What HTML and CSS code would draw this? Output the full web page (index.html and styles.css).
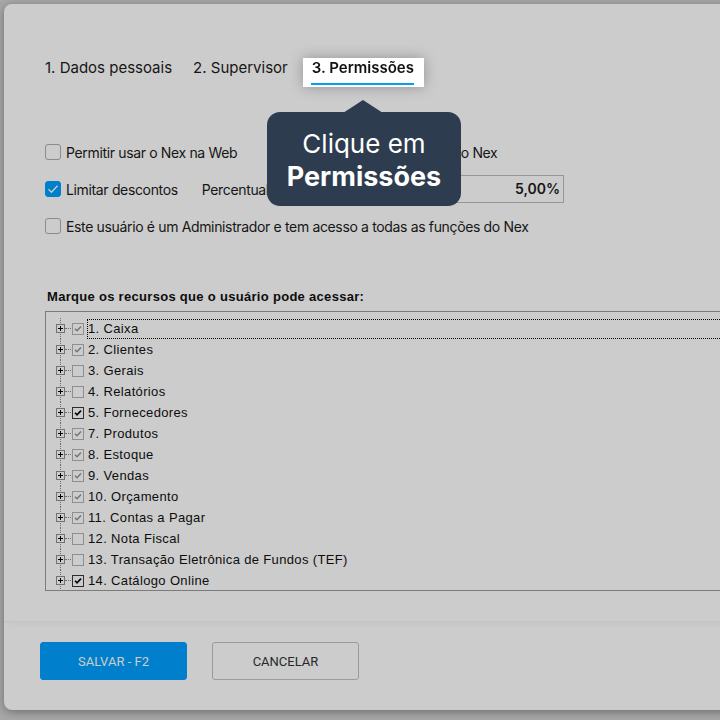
FILE: index.html
```html
<!DOCTYPE html>
<html lang="pt-BR">
<head>
  <meta charset="UTF-8" />
  <title>Usuário - Permissões</title>
  <link rel="stylesheet" href="styles.css">
</head>
<body>
  <div class="backdrop">
    <div class="dialog">
      <div class="dialog-main">
        <nav class="tabs">
          <div class="tab"><span>1. Dados pessoais</span></div>
          <div class="tab"><span>2. Supervisor</span></div>
          <div class="tab active"><span>3. Permissões</span></div>
        </nav>

        <div class="options">
          <div class="row">
            <label class="check web"><i class="box"></i>Permitir usar o Nex na Web</label>
            <label class="check"><i class="box"></i>Permitir acesso ao app do Nex</label>
          </div>
          <div class="row discount">
            <label class="check"><i class="box on"></i>Limitar descontos</label>
            <span class="percent-label">Percentual máximo de desconto</span>
            <div class="input">5,00%</div>
          </div>
          <div class="row">
            <label class="check"><i class="box"></i>Este usuário é um Administrador e tem acesso a todas as funções do Nex</label>
          </div>
        </div>

        <h3 class="tree-title">Marque os recursos que o usuário pode acessar:</h3>
        <div class="tree">
          <div class="node"><span class="exp"></span><span class="dots"></span><span class="cb grey"></span><span class="text focus">1. Caixa</span></div>
          <div class="node"><span class="exp"></span><span class="dots"></span><span class="cb grey"></span><span class="text">2. Clientes</span></div>
          <div class="node"><span class="exp"></span><span class="dots"></span><span class="cb"></span><span class="text">3. Gerais</span></div>
          <div class="node"><span class="exp"></span><span class="dots"></span><span class="cb"></span><span class="text">4. Relatórios</span></div>
          <div class="node"><span class="exp"></span><span class="dots"></span><span class="cb black"></span><span class="text">5. Fornecedores</span></div>
          <div class="node"><span class="exp"></span><span class="dots"></span><span class="cb grey"></span><span class="text">7. Produtos</span></div>
          <div class="node"><span class="exp"></span><span class="dots"></span><span class="cb grey"></span><span class="text">8. Estoque</span></div>
          <div class="node"><span class="exp"></span><span class="dots"></span><span class="cb grey"></span><span class="text">9. Vendas</span></div>
          <div class="node"><span class="exp"></span><span class="dots"></span><span class="cb grey"></span><span class="text">10. Orçamento</span></div>
          <div class="node"><span class="exp"></span><span class="dots"></span><span class="cb grey"></span><span class="text">11. Contas a Pagar</span></div>
          <div class="node"><span class="exp"></span><span class="dots"></span><span class="cb"></span><span class="text">12. Nota Fiscal</span></div>
          <div class="node"><span class="exp"></span><span class="dots"></span><span class="cb"></span><span class="text">13. Transação Eletrônica de Fundos (TEF)</span></div>
          <div class="node"><span class="exp"></span><span class="dots"></span><span class="cb black"></span><span class="text">14. Catálogo Online</span></div>
        </div>
      </div>

      <footer class="dialog-footer">
        <button class="btn primary">Salvar - F2</button>
        <button class="btn">Cancelar</button>
      </footer>
    </div>
  </div>

  <!-- tour: dim everything except the highlighted tab -->
  <div class="overlay"></div>
  <div class="tour-tip">Clique em<br><strong>Permissões</strong></div>
</body>
</html>
```

FILE: styles.css
```css
:root {
  --primary: #00a0ff;
  --text: #1c1c1c;
  --tip: #2d3c4e;
}
html, body {
  margin: 0; padding: 0;
  width: 720px; height: 720px;
  overflow: hidden;
  background: #d2d2d2;
  font-family: Inter, "Noto Sans", sans-serif;
  color: var(--text);
}
.backdrop {
  padding: 4px 0 0 4px;
}

/* Dialog */
.dialog {
  width: 790px;
  height: 706px;
  background: #fff;
  border-radius: 8px;
  box-shadow: 0 2px 10px rgba(0,0,0,0.35);
  display: flex;
  flex-direction: column;
}
.dialog-main {
  flex: 1;
  padding: 54px 0 0 41px;
  box-shadow: 0 6px 8px -6px rgba(0,0,0,0.08);
  border-radius: 8px 8px 0 0;
}
.dialog-footer {
  height: 89px;
  box-sizing: border-box;
  padding: 20px 0 0 36px;
  display: flex;
  align-items: flex-start;
  gap: 25px;
  border-top: 1px solid #f4f4f4;
}

/* Tabs */
.tabs {
  display: flex;
  margin-left: -9px;
  gap: 2px;
}
.tab {
  padding: 0 10px 2px 8px;
  font-size: 15px;
}
.tab span {
  display: block;
  line-height: 20px;
  padding-bottom: 5px;
  border-bottom: 2px solid transparent;
  padding-left: 1px;
}
.tab.active {
  position: relative;
  z-index: 11;
  margin-left: 3px;
  background: #fff;
  font-weight: 600;
  color: #111;
  box-shadow: 0 0 14px rgba(0,0,0,0.28);
}
.tab.active span { border-bottom-color: #0a9bf2; }

/* Checkbox options */
.options {
  margin-top: 51px;
  display: flex;
  flex-direction: column;
  gap: 9px;
}
.row {
  height: 28px;
  display: flex;
  align-items: center;
  font-size: 14px;
  letter-spacing: -0.35px;
}
.check {
  display: flex;
  align-items: center;
  gap: 5px;
}
.check.web { width: 239px; }
.box {
  width: 16px; height: 16px;
  box-sizing: border-box;
  border: 1.5px solid #aeaeae;
  border-radius: 3px;
  background: #fff;
}
.box.on {
  border-color: var(--primary);
  background: var(--primary) url("data:image/svg+xml,%3Csvg xmlns='http://www.w3.org/2000/svg' viewBox='0 0 16 16'%3E%3Cpath d='M3.5 8.2l3 3 6-6.4' fill='none' stroke='%23fff' stroke-width='1.3'/%3E%3C/svg%3E") center / 16px no-repeat;
}
.discount { width: 519px; }
.percent-label { margin-left: 24px; }
.input {
  margin-left: auto;
  width: 108px;
  height: 28px;
  box-sizing: border-box;
  border: 1px solid #bcbcbc;
  text-align: right;
  padding: 0 3px;
  line-height: 26px;
  font-weight: 600;
  letter-spacing: 0;
}

/* Tree */
.tree-title {
  margin: 49px 0 6px 2px;
  font: bold 13px/16px "Liberation Sans", Arial, sans-serif;
  letter-spacing: 0.3px;
  color: #111;
}
.tree {
  height: 280px;
  box-sizing: border-box;
  border: 1px solid #9a9a9a;
  border-right: 0;
  padding-top: 6px;
  overflow: hidden;
  font: 13px "Liberation Sans", Arial, sans-serif;
  letter-spacing: 0.35px;
}
.node {
  height: 21px;
  display: flex;
  align-items: center;
  padding-left: 10px;
  background: repeating-linear-gradient(to bottom, #8a8a8a 0 1px, transparent 1px 2px) 14px 0 / 1px 100% no-repeat;
}
.exp {
  width: 9px; height: 9px;
  box-sizing: border-box;
  border: 1px solid #8f8f8f;
  background: #fff url("data:image/svg+xml,%3Csvg xmlns='http://www.w3.org/2000/svg' viewBox='0 0 7 7'%3E%3Cpath d='M1 3.5h5M3.5 1v5' stroke='%23000' stroke-width='1'/%3E%3C/svg%3E") center / 7px no-repeat;
}
.dots {
  width: 6px;
  margin: 0 1px 0 0;
  border-top: 1px dotted #8a8a8a;
}
.cb {
  width: 12px; height: 12px;
  box-sizing: border-box;
  border: 1px solid #b3b3b3;
  background: #fff;
}
.cb.grey {
  background: #fff url("data:image/svg+xml,%3Csvg xmlns='http://www.w3.org/2000/svg' viewBox='0 0 10 10'%3E%3Cpath d='M2 4.8l2 2 4-4.2' fill='none' stroke='%23909090' stroke-width='1.4'/%3E%3C/svg%3E") center / 10px no-repeat;
}
.cb.black {
  border-color: #3a3a3a;
  background: #fff url("data:image/svg+xml,%3Csvg xmlns='http://www.w3.org/2000/svg' viewBox='0 0 10 10'%3E%3Cpath d='M2 4.8l2 2 4-4.2' fill='none' stroke='%23000' stroke-width='1.6'/%3E%3C/svg%3E") center / 10px no-repeat;
}
.text {
  margin-left: 3px;
  padding: 1px 1px;
  line-height: 18px;
  color: #111;
}
.text.focus {
  flex: 1;
  outline: 1px dotted #000;
  outline-offset: -1px;
}

/* Footer buttons */
.btn {
  width: 147px;
  height: 38px;
  border-radius: 3px;
  border: 1px solid #c2c2c2;
  background: #fff;
  font: 13px Roboto, sans-serif;
  text-transform: uppercase;
  color: #333;
}
.btn.primary {
  background: var(--primary);
  border-color: var(--primary);
  color: #fff;
}

/* Tour overlay + tooltip */
.overlay {
  position: fixed;
  inset: 0;
  background: rgba(0,0,0,0.2);
  z-index: 10;
}
.tour-tip {
  position: absolute;
  left: 267px;
  top: 112px;
  width: 194px;
  height: 94px;
  box-sizing: border-box;
  padding-top: 15px;
  background: var(--tip);
  border-radius: 13px;
  color: #fff;
  text-align: center;
  font-size: 26px;
  line-height: 33px;
  z-index: 12;
}
.tour-tip strong { font-weight: 700; font-size: 27px; }
.tour-tip::before {
  content: '';
  position: absolute;
  left: 76px;
  top: -12px;
  border: 20px solid transparent;
  border-top: 0;
  border-bottom: 13px solid var(--tip);
}
```
